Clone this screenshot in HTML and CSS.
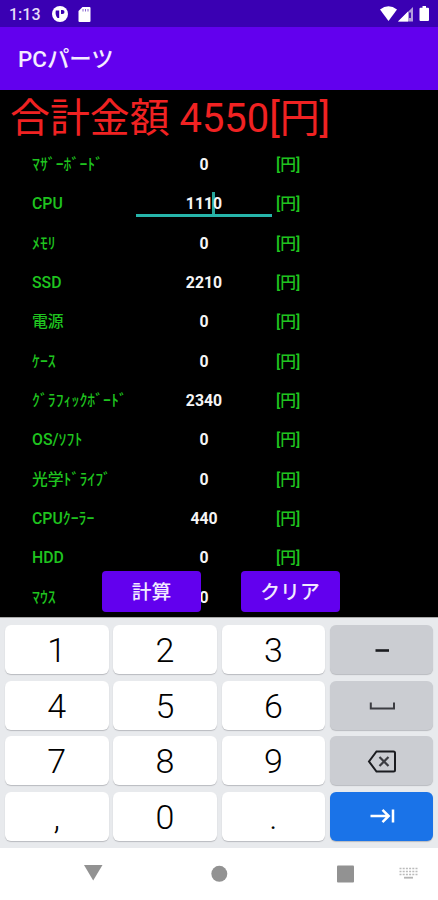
FILE: index.html
```
<!DOCTYPE html>
<html lang="ja">
<head>
<meta charset="UTF-8">
<title>PCパーツ</title>
<link rel="stylesheet" href="styles.css">
</head>
<body>

<div class="status">
  <span class="clock">1:13</span>
  <svg class="app-icon" width="16" height="16" viewBox="0 0 16 16">
    <circle cx="8" cy="8" r="8" fill="#fff"/>
    <path d="M3.800 4.500h3.400v7.500H5.500Q3 9 3.800 4.500z" fill="#3a00b3"/>
    <path d="M9 4h1.500a2 2 0 0 1 0 4H9z" fill="#3a00b3"/>
  </svg>
  <svg class="sd-icon" width="13" height="15" viewBox="0 0 13 15">
    <path d="M4.500 0H11.500Q12.500 0 12.500 1V14Q12.500 15 11.500 15H1.500Q.5 15 .5 14V4z" fill="#fff"/>
    <path d="M5 2v2.500M7.500 2v2.500M10 2v2.500" stroke="#3a00b3" stroke-width="1" opacity=".6"/>
  </svg>
  <svg class="signals" width="50" height="16" viewBox="0 0 50 16">
    <path d="M0 3.500Q8.500-3 17 3.500L8.500 15z" fill="#fff"/>
    <path d="M18 15.500L33 1V15.500z" fill="#b39ddb"/>
    <path d="M18 15.500L28 5.500V15.500z" fill="#fff"/>
    <path d="M30 6.500v5.500" stroke="#3a00b3" stroke-width="1.800"/>
    <path d="M42.500 0h3.500v1.700h2q1 0 1 1V14q0 1-1 1h-7.500q-1 0-1-1V2.700q0-1 1-1h2z" fill="#fff"/>
  </svg>
</div>

<div class="appbar">PCパーツ</div>

<div class="content">
  <div class="total">合計金額 4550[円]</div>
  <div class="parts">
    <div class="row"><span class="name">ﾏｻﾞｰﾎﾞｰﾄﾞ</span><span class="price">0</span><span class="yen">[円]</span></div>
    <div class="row"><span class="name">CPU</span><span class="price focus">111<i class="caret"></i>0</span><span class="yen">[円]</span></div>
    <div class="row"><span class="name">ﾒﾓﾘ</span><span class="price">0</span><span class="yen">[円]</span></div>
    <div class="row"><span class="name">SSD</span><span class="price">2210</span><span class="yen">[円]</span></div>
    <div class="row"><span class="name">電源</span><span class="price">0</span><span class="yen">[円]</span></div>
    <div class="row"><span class="name">ｹｰｽ</span><span class="price">0</span><span class="yen">[円]</span></div>
    <div class="row"><span class="name">ｸﾞﾗﾌｨｯｸﾎﾞｰﾄﾞ</span><span class="price">2340</span><span class="yen">[円]</span></div>
    <div class="row"><span class="name">OS/ｿﾌﾄ</span><span class="price">0</span><span class="yen">[円]</span></div>
    <div class="row"><span class="name">光学ﾄﾞﾗｲﾌﾞ</span><span class="price">0</span><span class="yen">[円]</span></div>
    <div class="row"><span class="name">CPUｸｰﾗｰ</span><span class="price">440</span><span class="yen">[円]</span></div>
    <div class="row"><span class="name">HDD</span><span class="price">0</span><span class="yen">[円]</span></div>
    <div class="row"><span class="name">ﾏｳｽ</span><span class="price">0</span></div>
  </div>
  <!-- buttons float over the list -->
  <div class="actions">
    <button class="btn">計算</button>
    <button class="btn">クリア</button>
  </div>
</div>

<div class="keyboard">
  <div class="key">1</div>
  <div class="key">2</div>
  <div class="key">3</div>
  <div class="key fn">
    <svg width="32" height="24" viewBox="0 0 32 24"><path d="M9.500 12.500H23" stroke="#1b1c20" stroke-width="2.600"/></svg>
  </div>
  <div class="key">4</div>
  <div class="key">5</div>
  <div class="key">6</div>
  <div class="key fn">
    <svg width="32" height="24" viewBox="0 0 32 24"><path d="M4.800 9.500V15.500H28V9.500" fill="none" stroke="#3c3d42" stroke-width="2"/></svg>
  </div>
  <div class="key">7</div>
  <div class="key">8</div>
  <div class="key">9</div>
  <div class="key fn">
    <svg width="32" height="24" viewBox="0 0 32 24"><path d="M10.500 2.500H27.500Q29 2.500 29 4V21Q29 22.500 27.500 22.500H10.500L3 12.500z" fill="none" stroke="#1b1c20" stroke-width="2"/><path d="M13.500 8l9 9M22.500 8l-9 9" stroke="#3c3d42" stroke-width="2.200"/></svg>
  </div>
  <div class="key">,</div>
  <div class="key">0</div>
  <div class="key">.</div>
  <div class="key next">
    <svg width="32" height="24" viewBox="0 0 32 24"><path d="M4.500 12H22M16.500 5.800L22.700 12L16.500 18.200M27 5.500V18.500" fill="none" stroke="#fff" stroke-width="2.500"/></svg>
  </div>
</div>

<div class="navbar">
  <svg width="438" height="52" viewBox="0 0 438 52" fill="#929292">
    <path d="M84 17h18.500L93.200 32.500z"/>
    <circle cx="219.300" cy="25.800" r="8"/>
    <rect x="337" y="17.500" width="17" height="17" rx="1"/>
    <path d="M399.500 20.500h18M399.500 23.500h18M399.500 26.500h18" stroke="#bbb" stroke-width="1.700" stroke-dasharray="2 1.200"/>
    <path d="M404 29.700h9" stroke="#b4b4b4" stroke-width="1.800"/>
  </svg>
</div>

</body>
</html>
```

FILE: styles.css
```
body {
  margin: 0;
  width: 438px;
  height: 900px;
  overflow: hidden;
  background: #fff;
  font-family: Roboto, "Noto Sans CJK JP", sans-serif;
}

.status {
  display: flex;
  align-items: center;
  box-sizing: border-box;
  height: 27px;
  padding: 1px 8px 0 9px;
  background: #3a00b3;
  color: #e4dcf8;
}
.clock { width: 43px; font-size: 16px; font-weight: 500; }
.sd-icon { margin-left: 10px; }
.signals { margin-left: auto; }

.appbar {
  height: 63px;
  line-height: 65px;
  padding-left: 18px;
  background: #6200ee;
  color: #f4edff;
  font-size: 22.4px;
  font-weight: 500;
}

.content {
  position: relative;
  height: 527px;
  overflow: hidden;
  background: #000;
}
.total {
  height: 54px;
  line-height: 58px;
  padding-left: 10px;
  color: #f02222;
  font-size: 39.9px;
  white-space: nowrap;
}

.row {
  display: grid;
  grid-template-columns: 104px 136px 41px;
  height: 39.35px;
  line-height: 41px;
  padding-left: 32px;
  font-size: 15.8px;
}
.name, .yen { color: #1fc41f; font-weight: 500; white-space: nowrap; }
.yen { padding-left: 4px; }
.price {
  color: #f5f5f5;
  font-weight: 700;
  text-align: center;
}
.focus {
  box-sizing: border-box;
  height: 34px;
  border-bottom: 3px solid #26b5aa;
}
.caret {
  display: inline-block;
  width: 3px;
  height: 22px;
  margin: 0 -1.5px;
  vertical-align: -5px;
  background: #26a69a;
}

.actions {
  position: absolute;
  left: 102px;
  top: 481px;
  display: flex;
  gap: 39.5px;
}
.btn {
  width: 99px;
  height: 41px;
  padding: 0;
  border: 0;
  border-radius: 4px;
  background: #6200ee;
  color: #f1eaff;
  font: 500 19.8px/43px Roboto, "Noto Sans CJK JP", sans-serif;
}

.keyboard {
  display: grid;
  grid-template-columns: repeat(4, 103.5px);
  grid-template-rows: repeat(4, 49px);
  gap: 6.5px 4.8px;
  box-sizing: border-box;
  height: 231px;
  padding: 7px 5px 0;
  border-top: 1px solid #aaa;
  background: #e8eaed;
}
.key {
  display: flex;
  align-items: center;
  justify-content: center;
  box-sizing: border-box;
  padding-top: 2px;
  border-radius: 6px;
  background: #fff;
  box-shadow: 0 1px 1px #b9bbbf;
  color: #000;
  font-size: 34px;
  font-weight: 350;
  line-height: 47px;
}
.fn { padding-top: 0; background: #cbcdd2; }
.next { padding-top: 0; background: #1a73e8; }

.navbar { height: 52px; background: #fff; }
.navbar svg { display: block; }
```
